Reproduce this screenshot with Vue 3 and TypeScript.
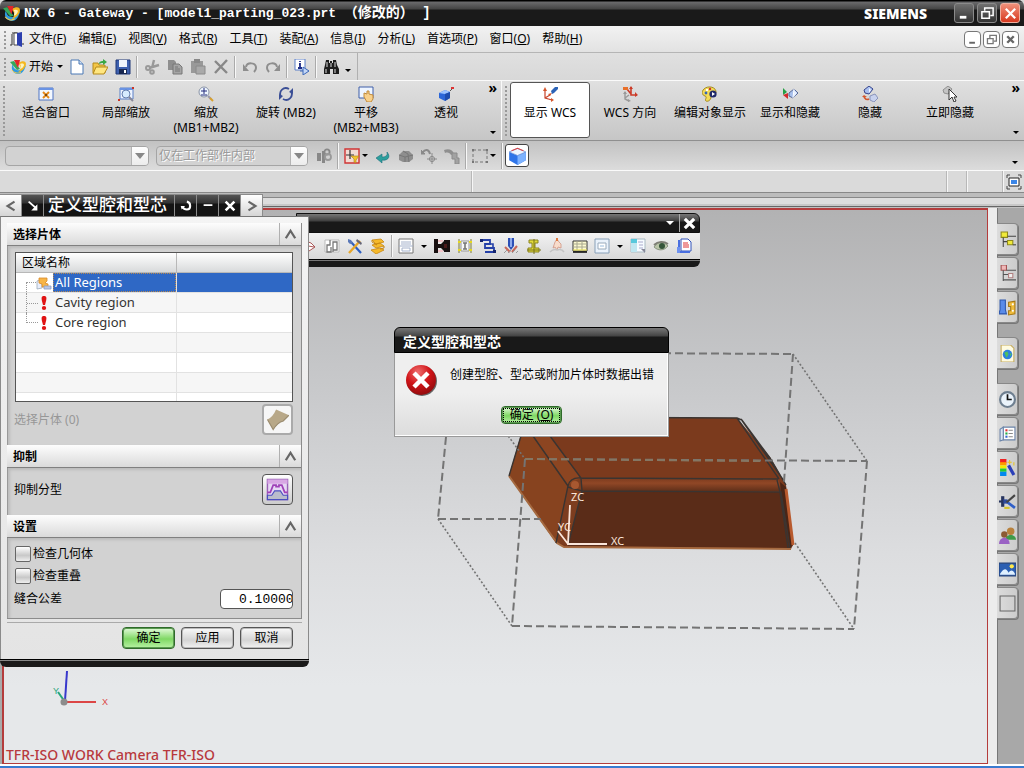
<script setup lang="ts">
import { ref } from 'vue'

interface Tool { icon?: string; sep?: boolean; caret?: boolean; label?: string }
interface BigTool { icon: string; label: string; sub?: string; active?: boolean }

const icons: Record<string, string> = {
  nx: '<path d="M3 5c-3 4 0 10 5 10 5 0 7-5 8-9-3 4-6 6-9 5C4 10 3 8 3 5z" fill="#2f9be0"/><path d="M8 4c5-3 8-2 8 1s-4 8-8 8c3-2 4-5 0-9z" fill="#f5b820"/><path d="M10 5c3-1 4 0 4 1s-2 4-4 4c1-2 1-4 0-5z" fill="#fdf3c0"/><path d="M0 3l4-1 6 8-3 1z" fill="#36a85a"/><path d="M4 1h6L8 9z" fill="#e2262a"/><path d="M2 11c2 3 6 4 9 2" stroke="#f3c94a" fill="none"/>',
  door: '<path d="M3 3v11H1M13 13h2M3 2h5" stroke="#333" fill="none"/><path d="M5 2h4v12H5z" fill="#fff" stroke="#444"/><path d="M8 2l5-1v15l-5-2z" fill="#2c3fae"/>',
  file: '<path d="M2 1h8l4 4v10H2z" fill="#fff" stroke="#4a78b5"/><path d="M10 1v4h4" fill="#cfe0f5" stroke="#4a78b5"/>',
  open: '<path d="M1 4h5l1 2h6v8H1z" fill="#f3c646" stroke="#b58a1c"/><path d="M4 8h12l-4 7H1z" fill="#ffe680" stroke="#b58a1c"/><path d="M7 5c0-3 3-3 4-3V0l4 3-4 3V4c-2 0-2 0-4 1z" fill="#3aa845"/>',
  save: '<path d="M1 1h14v14H1z" fill="#3c5fae" stroke="#1f3776"/><path d="M4 1h8v7H4z" fill="#eef3fb"/><path d="M4 10h8v5H4z" fill="#16264f"/><path d="M9 11h2v3H9z" fill="#fff"/>',
  cut: '<path d="M10 1L8 9M15 6L5 9" stroke="#999" stroke-width="2.4"/><circle cx="4" cy="9" r="2" fill="none" stroke="#999" stroke-width="2"/><circle cx="8" cy="13" r="1.8" fill="none" stroke="#999" stroke-width="2"/>',
  copy: '<path d="M1 1h6l2 2v8H1z" fill="#8f8f8f"/><path d="M6 5h6l3 3v7H6z" fill="#a5a5a5" stroke="#777"/><path d="M8 8h3M8 10h5M8 12h5" stroke="#777"/>',
  paste: '<path d="M1 2h12v12H1z" fill="#999"/><path d="M4 0h6v4H4z" fill="#888"/><path d="M6 7h9v8H6z" fill="#a9a9a9" stroke="#8a8a8a"/>',
  del: '<path d="M2 2l12 12M14 1L2 14" stroke="#888" stroke-width="2.4"/>',
  undo: '<path d="M4 8c1-5 10-5 10 1 0 2-1 3-2 4" fill="none" stroke="#8e8e8e" stroke-width="2"/><path d="M1 5v7h6z" fill="#8e8e8e"/>',
  redo: '<path d="M12 8C11 3 2 3 2 9c0 2 1 3 2 4" fill="none" stroke="#8e8e8e" stroke-width="2"/><path d="M15 5v7H9z" fill="#8e8e8e"/>',
  info: '<path d="M1 0h10v11H1z" fill="#fff" stroke="#5a7fc8"/><path d="M6 2v1M5 5h1v4M4 9h4" stroke="#1d2c88" stroke-width="1.8" fill="none"/><path d="M9 8v8l6-4z" fill="#c3d6f5" stroke="#3a66b8"/><path d="M6 12h3" stroke="#3a66b8"/>',
  find: '<path d="M3 1h3v3h1V2h2v2h1V1h3l1 5 2 4v5h-6v-5H7v5H1v-5l1-4z" fill="#1d1d1d"/><path d="M4 3v5M12 3v5M3 10v4M12 10v4M8 4v4" stroke="#ddd"/>',
  fit: '<path d="M1 2h14v12H1z" fill="#f3f8ff" stroke="#4f74c4"/><path d="M1 3h14" stroke="#6a93e4" stroke-width="2"/><path d="M5 6l6 6M11 6l-6 6" stroke="#e58a1c" stroke-width="2"/><path d="M7 8h2v2H7z" fill="#7a4a10"/>',
  region: '<path d="M2 2h13v11H2z" fill="#eef4ff" stroke="#5a80c8"/><path d="M2 3h13" stroke="#6a93e4" stroke-width="2"/><circle cx="8" cy="8" r="4" fill="#d7ecff" stroke="#667fae"/><path d="M11 11l4 4" stroke="#889" stroke-width="2"/><path d="M14 1h2v2h-2zM0 13h2v2H0z" fill="#c32"/>',
  zoom: '<circle cx="6" cy="6" r="5" fill="#eef6ff" stroke="#8a94a6"/><path d="M3 5h6M6 2v6M3 9h6" stroke="#222b7a"/><path d="M10 10l3 3" stroke="#99a" stroke-width="2"/><path d="M12 12l3 3" stroke="#d9a02c" stroke-width="2"/>',
  rotate: '<path d="M3 11C0 5 6 0 11 3M13 5c3 6-3 11-8 8" fill="none" stroke="#3b4f96" stroke-width="1.8"/><path d="M15 2v6l-4-2zM1 14V8l4 2z" fill="#3b4f96"/>',
  pan: '<path d="M1 1h14v11H1z" fill="#eef5ff" stroke="#3f5fa8"/><path d="M6 7l3 1V5h2v3l4 1v4l-2 3H9L6 11z" fill="#f8d08a" stroke="#c18a3a"/>',
  persp: '<path d="M1 7l6-3 5 2v6l-5 3-6-3z" fill="#2b66d8"/><path d="M1 7l6-3 5 2-5 2z" fill="#9cc3ff"/><path d="M7 8v7l5-3V6z" fill="#1d4cae"/><path d="M12 5l2-2" stroke="#555"/><path d="M13 1h3v2h-3z" fill="#d33"/>',
  wcs: '<path d="M3 4v8l7 2M3 12l5-3" stroke="#c8432b" fill="none" stroke-width="1.2"/><path d="M1 5l2-4 2 4zM9 12v4l3-2zM6 8l4-1-2 3z" fill="#d4552b"/><path d="M9 5l4-4h3v2l-4 4-2 1z" fill="#2c63b6"/>',
  orient: '<path d="M9 1v8h6M9 8L5 3" stroke="#cc3b28" fill="none" stroke-width="1.6"/><path d="M1 1h5v3H1z" fill="#e8702a"/><path d="M3 6v7l4 2M3 12l4-3" stroke="#999" fill="none" stroke-width="1.4"/><path d="M1 8l2-3 2 3zM6 13v3l3-1z" fill="#999"/><path d="M13 6l3 3-3 2zM7 3l2-3 2 3z" fill="#cc3b28"/>',
  palette: '<path d="M2 3c4-4 13-2 12 4-1 3-5 1-5 4s-3 5-5 4 2-4-1-5-4-4-1-7z" fill="#f4dc58" stroke="#a48a20"/><path d="M4 3h2v2H4z" fill="#fff"/><circle cx="4" cy="7" r="1.4" fill="#36b"/><circle cx="8" cy="3" r="1.2" fill="#c33"/><circle cx="11" cy="8" r="3.6" fill="#1f2868"/><path d="M10 6l3 2-3 2z" fill="#fff"/>',
  showhide: '<path d="M1 2l4 4-4 3z" fill="#25a045"/><path d="M1 9l5-2v6z" fill="#d42b2b"/><path d="M7 7l5-4 4 4-5 5-4-2z" fill="#a8c0ec" stroke="#596a98"/><path d="M12 3l-1 9" stroke="#fff"/><path d="M12 4l3 3-3 4z" fill="#e8f0ff"/>',
  hide: '<path d="M2 4l5-4 4 3-4 5-4-1z" fill="#a9c0f0" stroke="#36438a"/><path d="M7 2l2 2-2 3z" fill="#f2f6ff"/><path d="M8 10l5-2 3 4-4 4-4-2z" fill="#c8d2ee" stroke="#8a94bb"/><path d="M2 11c2 3 3 3 5 2" stroke="#d4552b" fill="none" stroke-width="1.8"/><path d="M0 11l2-2 3 2z" fill="#d4552b"/>',
  hidenow: '<path d="M1 4l5-4 4 3-4 5-4-1z" fill="#c4c4c4" stroke="#909090"/><path d="M7 3v11l3-3 2 5 2-1-2-4h3z" fill="#fff" stroke="#333"/>',
  link: '<path d="M1 5h4v8H1zM6 3h3v12H6z" fill="#888"/><circle cx="11" cy="4" r="2.6" fill="none" stroke="#888" stroke-width="1.8"/><circle cx="12" cy="9" r="3" fill="none" stroke="#999" stroke-width="1.8"/>',
  filter: '<path d="M1 1h14v14H1z" fill="#f2dcd4" stroke="#d03434" stroke-width="1.4"/><path d="M6 2v9M2 7h8" stroke="#333" stroke-width="1.2"/><path d="M7 8h8l-3 4v3l-2-1v-3z" fill="#f4c42c" stroke="#a8821c" stroke-width=".6"/>',
  back: '<path d="M12 4c5 6-1 9-5 8v3L1 10l6-4v3c3 0 6-1 5-5z" fill="#2d9f9c" stroke="#1c6f7e" stroke-width=".6"/>',
  solid: '<path d="M1 7l4-4h6l4 4v4l-4 3H5l-4-2z" fill="#8e8e8e"/><path d="M1 7l6 2 8-2M7 9v5M5 3l5 3 1 8" stroke="#777" fill="none"/>',
  point: '<path d="M2 4c2-3 6-3 7 2" fill="none" stroke="#8a8a8a" stroke-width="2"/><path d="M0 2v4h4zM11 5v11M6 11h10" stroke="#8a8a8a" fill="#8a8a8a"/><circle cx="11" cy="11" r="2.6" fill="none" stroke="#8a8a8a"/>',
  chain: '<path d="M0 2c5-2 9 0 10 4l-3 1C6 5 4 4 1 5z" fill="#8f8f8f"/><path d="M8 5h5v5h2v6h-4v-5H8z" fill="#a2a2a2" stroke="#8a8a8a"/>',
  marquee: '<path d="M1 2h14v12H1z" fill="none" stroke="#777" stroke-dasharray="3 2"/><path d="M0 1h2v2H0zM14 1h2v2h-2zM0 13h2v2H0zM14 13h2v2h-2z" fill="#777"/>',
  cube: '<path d="M1 5l7 3 7-3v7l-7 4-7-4z" fill="#2f74e8"/><path d="M8 8v8l7-4V5z" fill="#7db2ff"/><path d="M1 5l7-3 7 3-7 3z" fill="#eef5ff" stroke="#5a86d0" stroke-width=".6"/><path d="M3 4l5-2 5 2" stroke="#d44" fill="none" stroke-width=".9"/>',
  full: '<path d="M1 4V1h3M12 1h3v3M15 12v3h-3M4 15H1v-3" fill="none" stroke="#444"/><path d="M3 4h10v8H3z" fill="#fff" stroke="#222"/><path d="M5 6h6v4H5z" fill="#3b86e8"/>',
  gem: '<path d="M2 2l8 3 4 4-6 4-6-1z" fill="#fff" stroke="#a55"/><path d="M2 7l11 2" stroke="#a55"/>',
  pages: '<path d="M1 2h14v12H1z" fill="#fff" stroke="#bbb"/><path d="M6 2v5H3v7h4V9M9 14V7h0V4h4v8H9" stroke="#777" fill="none" stroke-width="1.3"/>',
  tools: '<path d="M4 4l10 11" stroke="#2d5fc0" stroke-width="2.2"/><path d="M13 3L2 15" stroke="#e8a72a" stroke-width="2.4"/><path d="M10 1l5 4-1 2-5-4z" fill="#667"/><path d="M1 1l3 1 2 3-3 1-2-2z" fill="#5a78b8"/>',
  layers: '<path d="M2 2l9-1 3 3-8 2zM2 7l8-2 4 3-8 2zM1 12l9-2 4 2-8 4z" fill="#f5b92b" stroke="#c78612" stroke-width=".8"/><path d="M2 2l0 2 5 3M14 8v2l-4 1" fill="none" stroke="#c78612"/>',
  form: '<path d="M1 1h14v14H1z" fill="#fff" stroke="#777"/><path d="M3 4h10M3 6h10M1 8h14M4 13v-3h8v3z" stroke="#a5b2cc" fill="none"/>',
  mold: '<path d="M0 1h4v14H0zM10 2h6v12h-6z" fill="#181010"/><path d="M4 6h3l3-3v10L7 10H4z" fill="#181010"/><path d="M4 2h5v2H4zM4 12h5v2H4z" fill="#f2c4c8"/><path d="M10 6h3v4h-3z" fill="#4a1a1a"/>',
  frame: '<path d="M4 3h8v10H4z" fill="#f6f6f6" stroke="#999"/><path d="M6 5h4M6 11h4M8 5v6" stroke="#777" fill="none" stroke-width="1.6"/><path d="M2 1v14M14 1v14" stroke="#8f8f50" stroke-width="1.2"/><path d="M1 3h3v2H1zM1 11h3v2H1zM12 3h3v2h-3zM12 11h3v2h-3z" fill="#e6d820"/>',
  pipe: '<path d="M1 2h9v4H5v4h9v4H5" fill="none" stroke="#2540a8" stroke-width="1.8"/><path d="M10 6h3v4" fill="none" stroke="#2540a8" stroke-width="1.6"/><path d="M0 1h3v3H0zM13 12h3v3h-3z" fill="#16256e"/>',
  drill: '<path d="M5 0h6v8l-3 4-3-4z" fill="#2c4fb6"/><path d="M7 0h2v9H7z" fill="#8fa9ea"/><path d="M2 9l5 5M14 8l-5 6" stroke="#c8685a" stroke-width="2"/><path d="M1 15l3-3M5 15l3-3M9 15l3-3M13 15l2-2" stroke="#999"/>',
  post: '<path d="M3 2h9v3h-3v5h4v4H2v-4h4V5H3z" fill="#e2da3a" stroke="#8a8420"/><path d="M8 1v15M1 12h14" stroke="#77701a"/>',
  eject: '<path d="M6 4l2-3 2 3 2 2v4l-3-1-1 3-2-3-2 1z" fill="#f8dccb" stroke="#cf9684" stroke-width=".8"/><path d="M7 0h2v3H7z" fill="#e07a40"/><path d="M1 14c3-3 5-3 7-2 3-1 5-1 7 2" stroke="#c4c4c4" stroke-width="1.6" fill="none"/>',
  sheet: '<path d="M1 3h14v10H1z" fill="#fdfad0" stroke="#333"/><path d="M1 6h14M1 9h14M5 3v10M10 3v10" stroke="#a8a890"/><path d="M1 12h14" stroke="#e8df4a"/><path d="M1 14h14" stroke="#111" stroke-width="1.6"/>',
  win: '<path d="M1 1h14v14H1z" fill="#eaf2fb" stroke="#88a0b8"/><path d="M4 5h8v6H4z" fill="#fff" stroke="#99aabb"/><path d="M6 7h4v2H6z" fill="#cde"/>',
  list: '<path d="M1 1h14v13H1z" fill="#f7fbff" stroke="#aabbc4"/><path d="M1 1h6v4H1z" fill="#58c8dc"/><path d="M1 5h6v9H1z" fill="#bfe6f0"/><path d="M8 4h5M9 7h4M9 10h4" stroke="#aac"/><path d="M11 11h4v4z" fill="#889"/>',
  eye: '<path d="M1 9c4-6 10-6 14-1-4 5-10 5-14 1z" fill="#b9c4a8" stroke="#7a8572" stroke-width=".8"/><circle cx="9" cy="8" r="3" fill="#35543a"/><path d="M1 7c4-4 10-4 14-1" stroke="#7d7d74" stroke-width="1.8" fill="none"/>',
  doc: '<path d="M5 1h7l3 3v9H5z" fill="#fff" stroke="#3355bb"/><path d="M7 5h5M7 7h6M7 9h6" stroke="#d33"/><path d="M3 2v12h11" fill="none" stroke="#4a6fe0" stroke-width="2"/><path d="M1 9h3v6H1z" fill="#6f92f0"/>',
  tree: '<path d="M2 1h6v5H2z" fill="#f0ea3a" stroke="#8f8a1c"/><path d="M4 6v9M4 10h5M8 5h8" stroke="#444" fill="none"/><path d="M8 9h5v4H8z" fill="#f0ea3a" stroke="#8f8a1c"/><path d="M13 13h3" stroke="#444"/>',
  tree2: '<path d="M2 0h5v5H2z" fill="#f0b8b8" stroke="#a05050"/><path d="M4 5v10M4 9h5M7 5h9M4 14h12" stroke="#555" fill="none"/><path d="M9 8h4v4H9z" fill="#eee" stroke="#b08080"/>',
  parts: '<path d="M1 1h5v9l1 4H0l1-4z" fill="#5a8be8" stroke="#2c56ac"/><path d="M9 3l6-1v12l-6 1v-4h2V7H9z" fill="#f0bd3c" stroke="#a87a18"/><circle cx="13" cy="5" r="1" fill="#fff"/><circle cx="13" cy="11" r="1" fill="#fff"/>',
  web: '<path d="M2 0h9l3 3v13H2z" fill="#fffbe0" stroke="#c5ac60"/><circle cx="8" cy="9" r="4.5" fill="#2d7fe0"/><path d="M5 7l3-1 1 3-2 3zM10 8h2l-1 3z" fill="#4fc060"/>',
  clock: '<circle cx="8" cy="8" r="7" fill="#eaf3fb" stroke="#6e7f90" stroke-width="2"/><path d="M8 3v5h4" fill="none" stroke="#111" stroke-width="1.6"/>',
  roles: '<path d="M4 2h11v12H4z" fill="#fff" stroke="#6a83a8"/><path d="M1 4l3-2v12l-3 1z" fill="#dbe6f4" stroke="#6a83a8"/><path d="M6 4h2v2H6z" fill="#d33"/><path d="M6 7h2v2H6z" fill="#2a4"/><path d="M6 10h2v2H6z" fill="#36c"/><path d="M9 5h4M9 8h4M9 11h4" stroke="#888"/>',
  spectrum: '<path d="M1 0h6v4H1z" fill="#e22"/><path d="M1 3h6v3H1z" fill="#f90"/><path d="M1 6h6v3H1z" fill="#ee0"/><path d="M1 9h6v3H1z" fill="#2c3"/><path d="M1 12h6v4H1z" fill="#08e"/><path d="M9 6l5 9" stroke="#2b3fb8" stroke-width="3"/><path d="M10 1v4M8 3h4M14 3v3" stroke="#e8c520"/>',
  cam: '<path d="M2 3h3v10H2z" fill="#27345e"/><path d="M4 6h4v4H4z" fill="#2f4a9c"/><path d="M7 8l8 6" stroke="#2f5fc8" stroke-width="2.6"/><path d="M15 2L7 9" stroke="#444" stroke-width="2"/><path d="M0 8h4" stroke="#27345e" stroke-width="2"/><path d="M5 14h5" stroke="#d6c42a" stroke-width="2"/>',
  people: '<circle cx="11" cy="4" r="3.5" fill="#b8813c"/><path d="M6 12c0-6 10-6 10 0z" fill="#3f9a48"/><circle cx="5" cy="7" r="3" fill="#8c5a34"/><path d="M0 16c0-8 10-8 10 0z" fill="#9a62c4"/>',
  photo: '<path d="M0 2h16v12H0z" fill="#2c5fb2" stroke="#27447a"/><path d="M1 12c4-6 6-5 8-1 2-3 4-3 6 1v1H1z" fill="#dff0ff"/><circle cx="12" cy="5" r="2" fill="#ffe84a"/>',
  blank: '<path d="M1 1h14v14H1z" fill="none" stroke="#666"/>',
  part: '<path d="M1 8Q5 6 7 1l9 4Q13 8 12 9 8 10 5 15z" fill="#b8a888"/><path d="M1 8l4 7Q8 10 12 9L16 5" fill="none" stroke="#9a8b6e" stroke-width=".8"/>',
  suppress: '<path d="M1 1h14v14H1z" fill="#e6d8f4" stroke="#9a62b8"/><path d="M1 1h14v3H1z" fill="#d8a8e4"/><path d="M1 10h2l2-5h2v1h2V5h2l2 5h2" fill="none" stroke="#a040b8" stroke-width="1.2"/><path d="M1 12h3l2-3h4l2 3h3v3H1z" fill="#b9bccb" stroke="#4a4fc0" stroke-width=".8"/>',
  regions: '<path d="M1 6l5-2v9l-5 1z" fill="#e8eefc" stroke="#9ab" stroke-width=".8"/><path d="M3 3h8v3l-2 2 3 1v3H6V9L3 8z" fill="#f7b548" stroke="#d88a2c" stroke-width=".8"/><path d="M8 11h7v3H8z" fill="#b9c8e8" stroke="#8a9cc4" stroke-width=".8"/>',
  bang: '<path d="M8 1c3 0 3 2 1 9H7C5 3 5 1 8 1z" fill="#e01414"/><ellipse cx="8" cy="13" rx="2.2" ry="2" fill="#e01414"/>',
}

const menus: [string, string][] = [
  ['文件', 'F'], ['编辑', 'E'], ['视图', 'V'], ['格式', 'R'], ['工具', 'T'], ['装配', 'A'],
  ['信息', 'I'], ['分析', 'L'], ['首选项', 'P'], ['窗口', 'O'], ['帮助', 'H'],
]
const standard: Tool[] = [
  { icon: 'file', label: '新建' }, { icon: 'open', label: '打开' }, { icon: 'save', label: '保存' }, { sep: true },
  { icon: 'cut', label: '剪切' }, { icon: 'copy', label: '复制' }, { icon: 'paste', label: '粘贴' }, { icon: 'del', label: '删除' }, { sep: true },
  { icon: 'undo', label: '撤消' }, { icon: 'redo', label: '重做' }, { sep: true },
  { icon: 'info', label: '对象信息' }, { sep: true }, { icon: 'find', label: '命令查找器' },
]
const viewTools: BigTool[] = [
  { icon: 'fit', label: '适合窗口' }, { icon: 'region', label: '局部缩放' },
  { icon: 'zoom', label: '缩放', sub: '(MB1+MB2)' }, { icon: 'rotate', label: '旋转 (MB2)' },
  { icon: 'pan', label: '平移', sub: '(MB2+MB3)' }, { icon: 'persp', label: '透视' },
]
const utilTools: BigTool[] = [
  { icon: 'wcs', label: '显示 WCS', active: true }, { icon: 'orient', label: 'WCS 方向' },
  { icon: 'palette', label: '编辑对象显示' }, { icon: 'showhide', label: '显示和隐藏' },
  { icon: 'hide', label: '隐藏' }, { icon: 'hidenow', label: '立即隐藏' },
]
const selTools: Tool[] = [
  { icon: 'link', label: '关联' }, { sep: true }, { icon: 'filter', caret: true, label: '过滤器' },
  { icon: 'back', label: '返回' }, { icon: 'solid', label: '实体' }, { icon: 'point', label: '点' },
  { icon: 'chain', label: '链' }, { sep: true }, { icon: 'marquee', caret: true, label: '框选' }, { sep: true },
]
const moldTools: Tool[] = [
  { icon: 'gem', label: '型腔' }, { icon: 'pages', label: '布局' }, { icon: 'tools', label: '注塑模工具' }, { icon: 'layers', label: '分型' }, { sep: true },
  { icon: 'form', caret: true, label: '模架' }, { icon: 'mold', label: '标准件' }, { icon: 'frame', label: '滑块' },
  { icon: 'pipe', label: '冷却' }, { icon: 'drill', label: '电极' }, { icon: 'post', label: '顶杆' }, { icon: 'eject', label: '修剪' },
  { icon: 'sheet', label: '清单' }, { icon: 'win', caret: true, label: '图纸' }, { icon: 'list', label: '孔表' },
  { icon: 'eye', label: '视图管理器' }, { icon: 'doc', label: '删除文件' },
]
const resourceGroups: string[][] = [
  ['tree', 'tree2', 'parts'], ['web'], ['clock', 'roles', 'spectrum', 'cam', 'people', 'photo', 'blank'],
]
const regionRows = [
  { name: 'All Regions', icon: 'regions' },
  { name: 'Cavity region', icon: 'bang' },
  { name: 'Core region', icon: 'bang' },
]
const selected = ref('All Regions')
const checkGeometry = ref(false)
const checkOverlap = ref(false)
const tolerance = ref('0.10000')
</script>

<template>
  <div class="app">
    <header class="titlebar">
      <svg class="logo" viewBox="0 0 16 16" v-html="icons.nx"></svg>
      <h1>NX 6 - Gateway - [model1_parting_023.prt <span>（修改的） ]</span></h1>
      <span class="brand">SIEMENS</span>
      <div class="winbtns">
        <button aria-label="最小化"><svg viewBox="0 0 16 16"><path d="M3 12h7" stroke="#fff" stroke-width="3" /></svg></button>
        <button aria-label="还原"><svg viewBox="0 0 16 16"><path d="M5 5V2h9v8h-3" fill="none" stroke="#fff" stroke-width="1.6" /><path d="M2 6h8v7H2z" fill="none" stroke="#fff" stroke-width="1.6" /></svg></button>
        <button class="close" aria-label="关闭"><svg viewBox="0 0 16 16"><path d="M3 3l10 10M13 3L3 13" stroke="#fff" stroke-width="2.4" /></svg></button>
      </div>
    </header>

    <nav class="menubar">
      <i class="grip"></i>
      <svg class="ico menuico" viewBox="0 0 16 16" v-html="icons.door"></svg>
      <button v-for="[name, key] in menus" :key="key" class="menu">{{ name }}(<u>{{ key }}</u>)</button>
      <div class="docbtns">
        <button aria-label="最小化窗口"><svg viewBox="0 0 16 16"><path d="M4 12h7" stroke="#666" stroke-width="2.4" /></svg></button>
        <button aria-label="还原窗口"><svg viewBox="0 0 16 16"><path d="M6 6V3h8v7h-3" fill="none" stroke="#777" stroke-width="1.6" /><path d="M3 7h7v6H3z" fill="none" stroke="#777" stroke-width="1.6" /></svg></button>
        <button aria-label="关闭窗口"><svg viewBox="0 0 16 16"><path d="M4 4l8 8M12 4l-8 8" stroke="#666" stroke-width="3" /></svg></button>
      </div>
    </nav>

    <div class="standard">
      <div class="stdgroup">
        <i class="grip"></i>
        <button class="start"><svg class="ico" viewBox="0 0 16 16" v-html="icons.nx"></svg>开始<b class="caret"></b></button>
        <template v-for="(t, i) in standard" :key="i">
          <i v-if="t.sep" class="sep"></i>
          <button v-else class="tool" :aria-label="t.label"><svg class="ico" viewBox="0 0 16 16" v-html="icons[t.icon!]"></svg></button>
        </template>
        <b class="caret low"></b>
      </div>
    </div>

    <div class="ribbon">
      <section class="rgroup left">
        <i class="grip"></i>
        <button v-for="t in viewTools" :key="t.label" class="big">
          <svg class="ico" viewBox="0 0 16 16" v-html="icons[t.icon]"></svg>
          <span>{{ t.label }}</span><span v-if="t.sub">{{ t.sub }}</span>
        </button>
        <div class="more"><span>»</span><b class="caret"></b></div>
      </section>
      <section class="rgroup right">
        <i class="grip"></i>
        <button v-for="t in utilTools" :key="t.label" class="big" :class="{ active: t.active }">
          <svg class="ico" viewBox="0 0 16 16" v-html="icons[t.icon]"></svg>
          <span>{{ t.label }}</span>
        </button>
        <div class="more"><span>»</span><b class="caret"></b></div>
      </section>
    </div>

    <div class="selbar">
      <label class="combo first"><select disabled aria-label="类型过滤器"><option></option></select><span class="drop"><b></b></span></label>
      <label class="combo"><select disabled aria-label="选择范围"><option>仅在工作部件内部</option></select><span class="drop"><b></b></span></label>
      <template v-for="(t, i) in selTools" :key="i">
        <i v-if="t.sep" class="sep tall"></i>
        <button v-else class="tool" :class="{ split: t.caret }" :aria-label="t.label"><svg class="ico" viewBox="0 0 16 16" v-html="icons[t.icon!]"></svg><b v-if="t.caret" class="caret"></b></button>
      </template>
      <button class="cubebtn" aria-label="着色"><svg class="cubeico" viewBox="0 0 16 16" v-html="icons.cube"></svg></button>
      <b class="caret end"></b>
    </div>

    <div class="cue">
      <span class="c1"></span><span class="c2"></span><span class="c3"></span><span class="c4"></span>
      <button class="fullbtn" aria-label="全屏"><svg class="ico" viewBox="0 0 16 16" v-html="icons.full"></svg></button>
    </div>
    <div class="edge"></div>

    <main class="work">
      <div class="viewport">
        <svg class="scene" aria-label="模型视图">
          <defs>
            <linearGradient id="band" x1="0" y1="0" x2="0" y2="1">
              <stop offset="0" stop-color="#7c3b1e" /><stop offset=".4" stop-color="#904726" /><stop offset="1" stop-color="#61301a" />
            </linearGradient>
          </defs>
          <g transform="translate(-4 -210)">
            <path d="M526 417L737 418 770 457 786 485 793 545 791 549 564 547 557 543 509 476z" fill="#7b3a1d" />
            <path d="M521 436L533 436 568 486 556 543 509 476z" fill="#87431f" />
            <path d="M533 436H550L581 478 568 485z" fill="#8c4521" />
            <path d="M568 485L581 478 582 491 568 545 556 543z" fill="#7d3d1f" />
            <path d="M581 478L778 479 782 491H582z" fill="url(#band)" />
            <path d="M582 491L780 492 790 548 568 546z" fill="#5a2c18" />
            <path d="M780 482L786 487 793 545 790 548 781 492z" fill="#4a2516" />
            <path d="M786 489L793 545" stroke="#b85a2e" stroke-width="3" />
            <path d="M509 476L557 543 564 547 791 549" fill="none" stroke="#a56a40" stroke-width="2" />
            <g fill="none" stroke="#3a3431" stroke-width="1.4">
              <path d="M526 417L737 418 779 479 M741 419L784 481 M737 418L742 420 770 458 786 485" />
              <path d="M521 436L509 476M533 436L568 486 556 543M550 436L581 478 582 491 568 545M581 478L778 479M582 491L781 492 790 548M777 480L780 492 788 548M568 486Q570 477 581 478M568 487L582 491" />
            </g>
            <circle cx="575" cy="485" r="4" fill="#a85830" />
            <g fill="none" stroke="#747474" stroke-width="2" stroke-dasharray="8 4">
              <path d="M447 352L793 354M867 461L854 629M512 626L854 629M438 519H541M525 459L512 626M446 437L438 519M793 354L784 482" />
              <path d="M525 459L867 461" />
            </g>
            <path d="M525 459L760 461" fill="none" stroke="#857764" stroke-width="2" stroke-dasharray="8 4" />
            <g fill="none" stroke="#747474" stroke-width="1.6" stroke-dasharray="2 2">
              <path d="M793 354L867 461M438 519L512 626M447 352L525 459M795 543L854 629" />
            </g>
            <g fill="none" stroke="#fbe6da" stroke-width="1.8"><path d="M570 505L568 544H607M568 544L558 531" /></g>
            <g class="wcslabel"><text x="571" y="501">ZC</text><text x="558" y="531">YC</text><text x="611" y="545">XC</text></g>
            <path d="M67 671L65 701" stroke="#3838cc" stroke-width="2" />
            <path d="M65 702H96" stroke="#dc4646" stroke-width="2" />
            <path d="M65 702L58 692" stroke="#27a57a" stroke-width="2" />
            <circle cx="64" cy="702" r="3.5" fill="#8c8c8c" />
            <g class="axis"><text x="53" y="694" fill="#27a57a">Y</text><text x="102" y="705" fill="#dc4646">X</text></g>
          </g>
        </svg>
        <p class="viewname">TFR-ISO WORK Camera TFR-ISO</p>
      </div>
      <aside class="resources">
        <div v-for="(g, i) in resourceGroups" :key="i" class="rtabs">
          <button v-for="n in g" :key="n" :aria-label="n"><svg viewBox="0 0 16 16" v-html="icons[n]"></svg></button>
        </div>
      </aside>
    </main>
    <div class="task"></div>

    <section class="floatbar" aria-label="注塑模向导">
      <header><b class="caret"></b><button aria-label="关闭工具条"><svg viewBox="0 0 16 16"><path d="M3 3l10 10M13 3L3 13" stroke="#fff" stroke-width="3.4" /></svg></button></header>
      <div class="fbody">
        <template v-for="(t, i) in moldTools" :key="i">
          <i v-if="t.sep" class="sep"></i>
          <button v-else class="tool" :class="{ split: t.caret }" :aria-label="t.label"><svg class="ico" viewBox="0 0 16 16" v-html="icons[t.icon!]"></svg><b v-if="t.caret" class="caret"></b></button>
        </template>
      </div>
      <footer></footer>
    </section>

    <form class="panel" @submit.prevent>
      <header class="rail">
        <button type="button" class="lite" aria-label="上一个"><svg viewBox="0 0 16 16"><path d="M12 3L4 8l8 5" fill="none" stroke="#666" stroke-width="2.4" /></svg></button>
        <button type="button" aria-label="固定"><svg viewBox="0 0 16 16"><path d="M3 3l8 7" stroke="#fff" stroke-width="2" /><path d="M13 6v7H6z" fill="#fff" /></svg></button>
        <h2>定义型腔和型芯</h2>
        <button type="button" aria-label="重置"><svg viewBox="0 0 16 16"><path d="M9 3c5 1 5 9 0 9-3 0-4-1-5-3" fill="none" stroke="#fff" stroke-width="2.4" /><path d="M2 8h5l-4 4z" fill="#fff" /></svg></button>
        <button type="button" aria-label="折叠"><svg viewBox="0 0 16 16"><path d="M3 7h10" stroke="#fff" stroke-width="2" /></svg></button>
        <button type="button" aria-label="关闭"><svg viewBox="0 0 16 16"><path d="M3 3l10 10M13 3L3 13" stroke="#fff" stroke-width="3" /></svg></button>
        <button type="button" class="lite" aria-label="下一个"><svg viewBox="0 0 16 16"><path d="M4 3l8 5-8 5" fill="none" stroke="#666" stroke-width="2.4" /></svg></button>
      </header>
      <div class="pbody">
        <div class="sections">
          <h3>选择片体<button type="button" aria-label="收起"><svg viewBox="0 0 16 16"><path d="M3 12l5-8 5 8" fill="none" stroke="#666" stroke-width="2.4" /></svg></button></h3>
          <div class="sec s1">
            <div class="grid">
              <table>
                <thead><tr><th scope="col">区域名称</th><th scope="col"></th></tr></thead>
                <tbody>
                  <tr v-for="r in regionRows" :key="r.name" :class="{ sel: selected === r.name }" @click="selected = r.name">
                    <td><div class="node"><i class="branch"></i><svg class="ico" viewBox="0 0 16 16" v-html="icons[r.icon]"></svg><span>{{ r.name }}</span></div></td><td></td>
                  </tr>
                  <tr v-for="n in 4" :key="n"><td></td><td></td></tr>
                </tbody>
              </table>
            </div>
            <div class="line dim"><span>选择片体 (0)</span><button type="button" class="sq" disabled aria-label="选择片体"><svg viewBox="0 0 16 16" v-html="icons.part"></svg></button></div>
          </div>
          <h3>抑制<button type="button" aria-label="收起"><svg viewBox="0 0 16 16"><path d="M3 12l5-8 5 8" fill="none" stroke="#666" stroke-width="2.4" /></svg></button></h3>
          <div class="sec s2">
            <div class="line"><span>抑制分型</span><button type="button" class="sq dark" aria-label="抑制分型"><svg viewBox="0 0 16 16" v-html="icons.suppress"></svg></button></div>
          </div>
          <h3>设置<button type="button" aria-label="收起"><svg viewBox="0 0 16 16"><path d="M3 12l5-8 5 8" fill="none" stroke="#666" stroke-width="2.4" /></svg></button></h3>
          <div class="sec s3">
            <label class="chk"><input v-model="checkGeometry" type="checkbox" />检查几何体</label>
            <label class="chk"><input v-model="checkOverlap" type="checkbox" />检查重叠</label>
            <div class="line tol"><label for="tol">缝合公差</label><input id="tol" v-model="tolerance" type="text" /></div>
          </div>
        </div>
        <div class="actions">
          <button type="submit" class="btn ok">确定</button><button type="button" class="btn">应用</button><button type="button" class="btn">取消</button>
        </div>
      </div>
      <footer></footer>
    </form>

    <section class="msg" role="alertdialog" aria-labelledby="msgtitle">
      <h2 id="msgtitle">定义型腔和型芯</h2>
      <div class="msgbody">
        <svg class="err" viewBox="0 0 32 32">
          <defs><radialGradient id="red" cx=".4" cy=".25" r=".8"><stop offset="0" stop-color="#f07070" /><stop offset=".5" stop-color="#d01418" /><stop offset="1" stop-color="#8c0a0c" /></radialGradient></defs>
          <circle cx="16" cy="17" r="15" fill="#666" /><circle cx="15" cy="16" r="15" fill="url(#red)" />
          <path d="M8 9l14 14M22 9L8 23" stroke="#fff" stroke-width="4.5" />
        </svg>
        <p>创建型腔、型芯或附加片体时数据出错</p>
      </div>
      <button class="btn ok focus"><span>确定 (<u>O</u>)</span></button>
    </section>
  </div>
</template>

<style>
body { margin: 0; overflow: hidden; }
</style>

<style scoped>
* { box-sizing: border-box; }
.app {
  position: relative; display: flex; flex-direction: column; height: 100vh; min-width: 0; overflow: hidden;
  background: #d9d9d9; color: #000; font: 12px/16px "Noto Sans", "Noto Sans CJK SC", sans-serif;
}
button { font: inherit; color: inherit; background: none; border: 0; padding: 0; margin: 0; display: inline-flex; align-items: center; justify-content: center; white-space: nowrap; }
h1, h2, h3, p { margin: 0; }
svg { display: block; flex: none; }
.ico { width: 16px; height: 16px; }
.caret { flex: none; width: 0; height: 0; border: 3px solid transparent; border-top-color: #000; border-bottom: 0; }
.sep { flex: none; width: 2px; height: 22px; margin: 0 2px; border-left: 1px solid #aaa; border-right: 1px solid #f8f8f8; }
.sep.tall { height: 26px; }
.grip { flex: none; width: 3px; align-self: stretch; margin: 5px 1px 3px 4px; background: radial-gradient(circle at 1px 1px, #999 1px, transparent 1px) 0 0 / 3px 4px; }
.tool { flex: none; width: 23px; height: 22px; }
.tool.split { width: 30px; justify-content: flex-start; padding-left: 3px; }
.split .caret { margin-left: 2px; }

.titlebar { display: flex; align-items: center; height: 26px; padding: 0 4px 0 3px; background: linear-gradient(#000 0 1px, #6a6a6c 2px, #444 9px, #1a1a1a 10px); border-radius: 6px 6px 0 0; color: #fff; }
.logo { width: 17px; height: 17px; margin-right: 4px; }
.titlebar h1 { flex: 1; font: bold 13px/20px "Liberation Mono", "Noto Sans CJK SC", monospace; white-space: pre; }
.titlebar h1 span { font-size: 14px; }
.brand { font: 900 14px/18px "Noto Sans", sans-serif; margin: 2px 27px 0 0; }
.winbtns { display: flex; gap: 3px; }
.winbtns button { width: 20px; height: 20px; border: 1px solid #8a8a8a; border-radius: 3px; background: linear-gradient(#707070, #333); }
.winbtns svg { width: 15px; height: 15px; }
.winbtns .close { background: linear-gradient(#f0907a, #d83a20); border-color: #f0b0a0; }

.menubar { display: flex; align-items: center; height: 27px; background: linear-gradient(#f2f2f2, #e2e2e2); border-bottom: 1px solid #b5b5b5; padding-right: 5px; }
.menuico { margin-left: 1px; margin-right: 4px; }
.menu { margin-right: 12px; }
.docbtns { margin-left: auto; display: flex; gap: 2px; }
.docbtns button { width: 17px; height: 17px; border: 1px solid #777; border-radius: 4px; background: #fff; }
.docbtns svg { width: 13px; height: 13px; }

.standard { height: 27px; display: flex; background: linear-gradient(#e0e0e0, #d8d8d8); }
.stdgroup { display: flex; align-items: center; width: 358px; border-right: 1px solid #b0b0b0; }
.start { gap: 3px; margin: 0 2px 0 2px; }
.start .caret { margin-left: 1px; }
.caret.low { margin: 8px 0 0 3px; }

.ribbon { display: flex; height: 61px; border-top: 1px solid #fafafa; border-bottom: 1px solid #8f8f8f; background: linear-gradient(#e0e0e0, #c6c6c6); }
.rgroup { display: flex; align-items: stretch; }
.rgroup .grip { margin: 5px 0 4px 3px; }
.rgroup.left { flex: 0 0 502px; border-right: 1px solid #fafafa; }
.rgroup.right { flex: 1; min-width: 0; }
.rgroup.right .grip { margin-right: 2px; }
.big { flex: 0 0 80px; flex-direction: column; justify-content: flex-start; padding-top: 3px; margin: 1px 0 2px; line-height: 15px; border: 1px solid transparent; }
.big .ico { margin-bottom: 3px; }
.big.active { background: #fff; border-color: #555; border-radius: 3px; }
.more { margin-left: auto; display: flex; flex-direction: column; justify-content: space-between; align-items: center; padding: 1px 4px 6px 0; font: bold 14px/12px "Noto Sans", sans-serif; }

.selbar { display: flex; align-items: center; height: 30px; padding: 0 6px 0 5px; background: linear-gradient(#c2c2c2, #dcdcdc); border-bottom: 1px solid #fafafa; }
.combo { position: relative; display: flex; width: 152px; height: 20px; margin-right: 4px; border: 1px solid #a5a5a5; border-radius: 4px; background: #d2d2d2; overflow: hidden; }
.combo.first { width: 144px; margin-right: 7px; }
.combo select { appearance: none; flex: 1; min-width: 0; border: 0; padding: 0 2px; background: none; font: inherit; color: #9b9b9b; opacity: 1; text-shadow: 1px 1px #fff; }
.drop { display: flex; width: 17px; align-items: center; justify-content: center; background: linear-gradient(#fff, #ececec); border-left: 1px solid #b5b5b5; }
.drop b { border: 5px solid transparent; border-top: 6px solid #888; border-bottom: 0; }
.cubebtn { width: 24px; height: 23px; border: 1px solid #444; border-radius: 3px; background: #fff; }
.cubeico { width: 19px; height: 19px; }
.caret.end { margin: 13px 0 0 auto; }

.cue { display: flex; align-items: center; height: 21px; background: #dadada; }
.cue span { align-self: stretch; border-right: 1px solid #f6f6f6; box-shadow: inset -1px 0 #b8b8b8; }
.c1 { flex: 0 0 473px; } .c2 { flex: 1; } .c3 { flex: 0 0 20px; } .c4 { flex: 0 0 36px; }
.fullbtn { width: 20px; height: 20px; }
.edge { height: 16px; background: linear-gradient(#888 0 1px, #bcbcbc 1px 5px, #888 5px 6px, #ddd 6px 12px, #c8c8c8 12px 14px, #666 14px 15px, #c0c0c0 15px); }

.work { flex: 1; display: flex; min-height: 0; background: #aaa; }
.viewport { position: relative; flex: 1; min-width: 0; margin-left: 2px; border: 1px solid #b43c3c; border-width: 2px 1px 1px 2px; background: linear-gradient(#b2b2b3, #c5c6c8 28%, #dcdddf 62%, #e6e8ea 86%); overflow: hidden; }
.scene { width: 100%; height: 100%; }
.wcslabel { fill: #fbe6da; font: 11px "Noto Sans", sans-serif; }
.axis { font: 9px "Liberation Sans", sans-serif; }
.viewname { position: absolute; left: 2px; bottom: 0; color: #b8393d; font: 500 14px/16px "Noto Sans", sans-serif; }
.resources { flex: 0 0 36px; border-left: 9px solid #ececec; background: #a8a8a8; padding-top: 15px; display: flex; flex-direction: column; gap: 14px; box-shadow: inset 1px 0 #777; }
.rtabs { display: flex; flex-direction: column; gap: 2px; }
.rtabs button { width: 21px; height: 32px; border: 1px solid #888; border-left: 0; border-radius: 0 4px 4px 0; background: linear-gradient(90deg, #dcdcdc, #ccc); box-shadow: 1px 1px #777; }
.rtabs svg { width: 17px; height: 17px; }
.task { height: 4px; background: linear-gradient(#fff 0 2px, #3a7bd0 2px); }

.floatbar { position: absolute; left: 296px; top: 213px; width: 404px; }
.floatbar header { display: flex; align-items: center; justify-content: flex-end; height: 20px; background: linear-gradient(#777, #3f3f3f 7px, #191919 8px); border-radius: 0 6px 0 0; border: 1px solid #111; }
.floatbar header .caret { border: 4px solid transparent; border-top-color: #fff; border-bottom: 0; margin-right: 5px; }
.floatbar header button { width: 20px; height: 18px; border-left: 1px solid #aaa; }
.floatbar header svg { width: 15px; height: 15px; }
.fbody { display: flex; align-items: center; height: 26px; padding-left: 1px; background: linear-gradient(#f2f2f2, #d8d8d8); }
.fbody .tool.split { width: 35px; }
.fbody .split .caret { margin-left: 7px; }
.floatbar footer { height: 8px; background: linear-gradient(#000 1px, #777 1px 2px, #191919 2px); border-radius: 0 0 6px 0; }

.panel { position: absolute; left: 0; top: 194px; width: 309px; }
.rail { display: flex; width: 263px; height: 22px; gap: 1px; padding: 1px 1px 0 0; background: #8c8c8c; color: #fff; }
.rail button { flex: 0 0 21px; background: linear-gradient(#555, #333 8px, #141414 9px); }
.rail .lite { background: linear-gradient(#fff, #d5d5d5); }
.rail svg { width: 14px; height: 14px; }
.rail h2 { flex: 1; padding-left: 4px; background: linear-gradient(#555, #333 8px, #141414 9px); font: 500 17px/17px "Noto Sans CJK SC", sans-serif; white-space: nowrap; }
.pbody { border: 1px solid #8a8a8a; border-bottom: 0; border-top-color: #777; background: linear-gradient(#f4f4f4, #e4e4e4); padding: 6px 6px 0; height: 443px; }
.panel > footer { height: 8px; background: linear-gradient(#000 1px, #888 1px 2px, #1a1a1a 2px); border-radius: 0 0 6px 6px; }
.sections { border-right: 1px solid #8c8c8c; border-bottom: 1px solid #8c8c8c; }
h3 { display: flex; align-items: center; height: 23px; padding-left: 6px; font: bold 12px/20px "Noto Sans CJK SC", sans-serif; background: linear-gradient(#fdfdfd, #dadada); border-bottom: 1px solid #808080; }
h3 button { margin-left: auto; align-self: stretch; width: 22px; border-left: 1px solid #b0b0b0; }
h3 svg { width: 15px; height: 15px; }
.sec { padding: 0 8px; background: #d2d2d2; border-left: 1px solid #999; box-shadow: inset 2px 2px 3px #bbb; }
.s1 { height: 199px; padding-top: 6px; }
.s2 { height: 47px; padding-top: 6px; }
.s3 { height: 80px; padding-top: 5px; }
.grid { height: 150px; margin-left: -1px; border: 1px solid #555; background: #fff; overflow: hidden; }
table { width: 100%; border-collapse: separate; border-spacing: 0; table-layout: fixed; font-size: 13px; line-height: 16px; }
th, td { height: 20px; padding: 0; border-right: 1px solid #e2e2e2; border-bottom: 1px solid #e2e2e2; }
th { text-align: left; font-weight: normal; font-size: 12px; padding-left: 6px; background: linear-gradient(#fff, #d8dadb); border-color: #b8b8b8; }
th:first-child { width: 161px; }
th:last-child, td:last-child { border-right: 0; }
tbody tr:nth-child(even) td { background: #f6f6f6; }
.node { display: flex; align-items: center; height: 19px; color: #333; }
.branch { width: 12px; height: 20px; margin-left: 10px; border-left: 1px dotted #999; background: linear-gradient(90deg, #999 50%, transparent 50%) 0 10px / 2px 1px repeat-x; }
tr:nth-child(3) .branch { height: 10px; align-self: flex-start; background-position: 0 9px; }
tr:nth-child(1) .branch { height: 10px; align-self: flex-end; background-position: 0 0; }
.node .ico { margin: 0 1px 0 -2px; }
.node span { flex: 1; padding-left: 2px; line-height: 19px; }
.sel .node span { background: #2f68c5; color: #fff; outline: 1px dotted #b98a50; outline-offset: -1px; }
.sel td:last-child { background: #2f68c5; }
.line { display: flex; align-items: center; justify-content: space-between; margin-left: -2px; }
.line.dim { color: #979797; margin-top: 2px; }
.sq { width: 31px; height: 31px; border: 2px solid #aaa; border-radius: 4px; background: #f6f6f6; }
.sq.dark { border: 1px solid #555; background: linear-gradient(#fff, #ccc); }
.sq svg { width: 23px; height: 23px; }
.chk { display: flex; align-items: center; height: 22px; gap: 2px; }
.chk input { appearance: none; width: 16px; height: 16px; margin: 0 0 0 -1px; border: 1px solid #666; border-radius: 2px; background: linear-gradient(#fff, #c8c8c8 60%, #eee); }
.chk input:checked { background: #333; }
.tol { margin-top: 2px; }
.tol input { width: 73px; height: 20px; padding: 0 0 0 18px; border: 1px solid #555; border-radius: 4px; background: #fff; font: 13px/18px "Liberation Mono", monospace; color: #000; }
.actions { display: flex; justify-content: flex-end; gap: 6px; margin-top: 3px; padding: 4px 9px 0 0; border-top: 1px solid #aaa; }
.btn { width: 53px; height: 22px; border: 1px solid #555; border-radius: 4px; background: linear-gradient(#fafafa, #d4d4d4 60%, #f2f2f2); box-shadow: inset 0 0 0 1px #bbb; }
.btn.ok { border-color: #2f6a2a; background: linear-gradient(#e4fbdc, #7fd864 55%, #b8f2a4); box-shadow: inset 0 0 0 1px #5a9a50; }

.msg { position: absolute; left: 394px; top: 327px; width: 275px; height: 110px; display: flex; flex-direction: column; background: linear-gradient(#efefef 60%, #dcdcdc); border: 1px solid #999; border-top: 0; border-radius: 6px 6px 0 0; box-shadow: inset -1px -1px #fff; }
.msg h2 { height: 26px; margin: 0 -1px; padding: 2px 0 0 8px; color: #fff; font: bold 14px/22px "Noto Sans CJK SC", sans-serif; border: 1px solid #000; border-radius: 6px 6px 0 0; background: linear-gradient(#777, #444 8px, #191919 9px); }
.msgbody { display: flex; padding: 11px 0 0 11px; }
.err { width: 32px; height: 32px; margin-right: 12px; }
.msgbody p { line-height: 22px; white-space: nowrap; }
.msg .btn { align-self: center; width: 61px; height: 18px; margin-top: 10px; }
.focus { line-height: 14px; }
.focus span { flex: 1; height: 14px; margin: 0 1px; border: 1px dotted #000; line-height: 12px; }
</style>
